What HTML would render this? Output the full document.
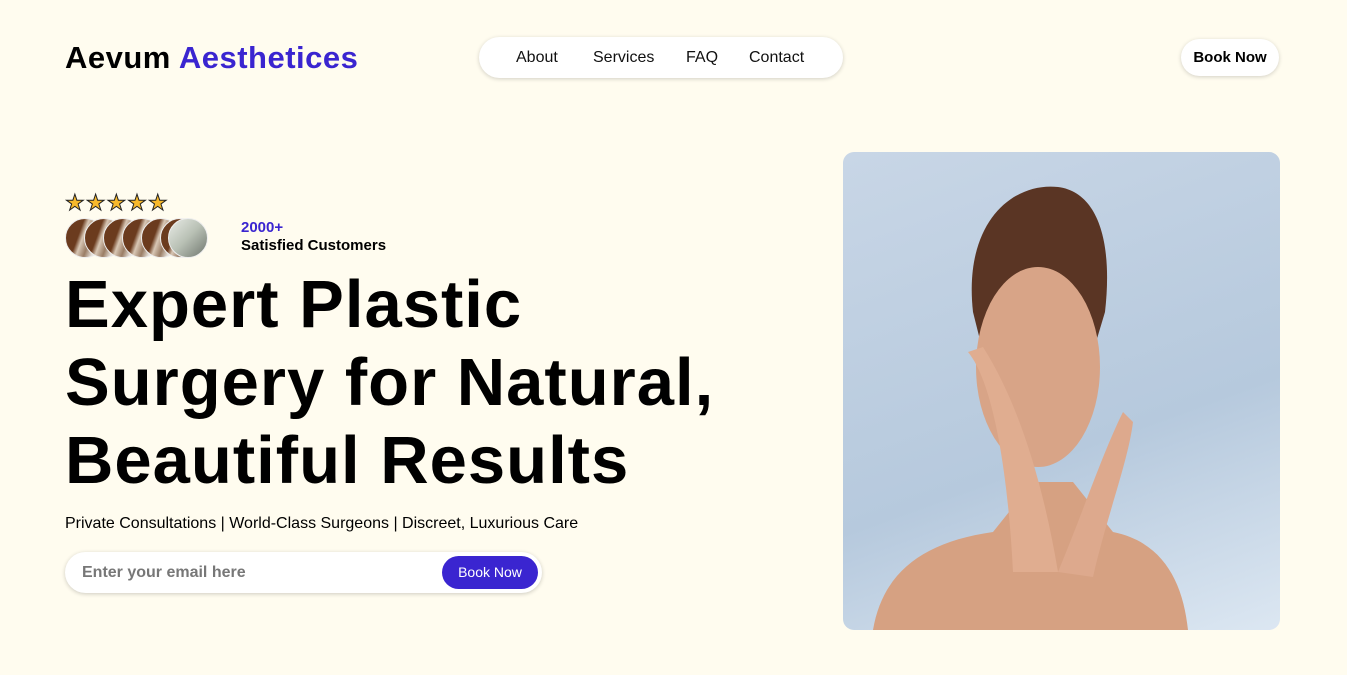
<!DOCTYPE html>
<html><head><meta charset="utf-8"><style>
*{margin:0;padding:0;box-sizing:border-box}
body{width:1347px;height:675px;background:#fffcef;font-family:"Liberation Sans",sans-serif;color:#000;position:relative;overflow:hidden}
.logo{position:absolute;left:65px;top:40px;font-size:31px;font-weight:bold;letter-spacing:0.5px}
.logo span{color:#3a25d0}
.nav{position:absolute;left:479px;top:37px;width:364px;height:41px;background:#fff;border-radius:21px;box-shadow:0 1px 4px rgba(0,0,0,.18);font-size:16px}
.nav a{position:absolute;top:12px;color:#111;text-decoration:none}
.bk{position:absolute;left:1181px;top:39px;width:98px;height:37px;background:#fff;border-radius:19px;box-shadow:0 1px 4px rgba(0,0,0,.18);font-size:15px;font-weight:bold;text-align:center;line-height:37px}
.stars{position:absolute;left:65px;top:190px;font-size:22px;color:#f7b92c;letter-spacing:1px;-webkit-text-stroke:1px #222}
.av{position:absolute;top:218px;width:40px;height:40px;border-radius:50%;background:linear-gradient(110deg,#6b3b1e 0 35%,#d8c7b5 45%,#9a7d65 60%,#e6e2dc 75%);border:1px solid #eee}
.cnt{position:absolute;left:241px;top:219px;font-size:15px;font-weight:bold;line-height:18px}
.cnt b{color:#3a25d0}
h1{position:absolute;left:65px;top:266px;font-size:67px;line-height:78px;font-weight:bold;letter-spacing:1px}
.sub{position:absolute;left:65px;top:515px;font-size:16px}
.em{position:absolute;left:65px;top:552px;width:477px;height:41px;background:#fff;border-radius:21px;box-shadow:0 1px 4px rgba(0,0,0,.2)}
.em .p{position:absolute;left:17px;top:12px;color:#777;font-size:16px;font-weight:bold}
.em .b{position:absolute;right:4px;top:4px;width:96px;height:33px;border-radius:17px;background:#3a25d0;color:#fff;font-size:14px;text-align:center;line-height:33px}
.img{position:absolute;left:843px;top:152px;width:437px;height:478px;border-radius:11px;overflow:hidden;background:linear-gradient(160deg,#c8d6e6,#b6c9dd 60%,#dce7f2)}
</style></head><body>
<div class="logo">Aevum <span>Aesthetices</span></div>
<div class="nav"><a style="left:37px">About</a><a style="left:114px">Services</a><a style="left:207px">FAQ</a><a style="left:270px">Contact</a></div>
<div class="bk">Book Now</div>
<div class="stars">★★★★★</div>
<div class="av" style="left:65px"></div><div class="av" style="left:84px"></div><div class="av" style="left:103px"></div><div class="av" style="left:122px"></div><div class="av" style="left:141px"></div><div class="av" style="left:160px"></div><div class="av" style="left:168px;background:linear-gradient(135deg,#e8ebe6,#b8c0b4 50%,#6f766e)"></div>
<div class="cnt"><b>2000+</b><br>Satisfied Customers</div>
<h1>Expert Plastic<br>Surgery for Natural,<br>Beautiful Results</h1>
<div class="sub">Private Consultations | World-Class Surgeons | Discreet, Luxurious Care</div>
<div class="em"><div class="p">Enter your email here</div><div class="b">Book Now</div></div>
<div class="img"><svg width="437" height="478">
<path d="M130 160 C120 70 170 30 215 35 C255 40 270 90 262 160 L250 200 L140 200Z" fill="#5a3524"/>
<ellipse cx="195" cy="215" rx="62" ry="100" fill="#d8a487"/>
<path d="M30 478 C40 420 80 390 150 380 L190 330 L230 330 L270 380 C320 390 340 430 345 478Z" fill="#d6a182"/>
<path d="M125 200 C150 230 165 320 170 420 L215 420 C200 330 175 250 140 195Z" fill="#e0ad90"/>
<path d="M280 260 C260 300 240 360 215 420 L250 425 C265 360 285 310 290 270Z" fill="#dda98d"/>
</svg></div>
</body></html>
